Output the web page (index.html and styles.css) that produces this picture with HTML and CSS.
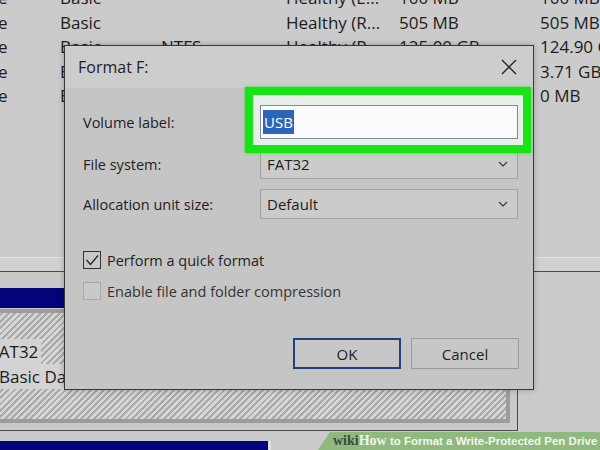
FILE: index.html
```html
<!DOCTYPE html>
<html lang="en">
<head>
  <meta charset="UTF-8" />
  <title>Format F:</title>
  <link rel="stylesheet" href="styles.css">
</head>
<body>
  <div class="screen">
    <!-- Volume list behind the dialog -->
    <div class="volumes">
      <div class="vol-row"><span>Simple</span><span>Basic</span><span></span><span>Healthy (E...</span><span>100 MB</span><span>100 MB</span></div>
      <div class="vol-row"><span>Simple</span><span>Basic</span><span></span><span>Healthy (R...</span><span>505 MB</span><span>505 MB</span></div>
      <div class="vol-row"><span>Simple</span><span>Basic</span><span>NTFS</span><span>Healthy (P...</span><span>125.00 GB</span><span>124.90 GB</span></div>
      <div class="vol-row"><span>Simple</span><span>Basic</span><span>FAT32</span><span>Healthy (B...</span><span>3.71 GB</span><span>3.71 GB</span></div>
      <div class="vol-row"><span>Simple</span><span>Basic</span><span></span><span>Healthy (...</span><span>16 MB</span><span>0 MB</span></div>
    </div>
    <div class="splitter"></div>

    <!-- Disk map -->
    <div class="disk">
      <div class="part-head"></div>
      <div class="part-body">
        <div class="part-label">
          <span class="fs">FAT32</span>
          <span class="status">Basic Data Partition)</span>
        </div>
      </div>
    </div>
    <div class="disk2">
      <div class="part-head short"></div>
    </div>

    <!-- Format dialog -->
    <div class="dialog">
      <div class="dialog-title">
        <span>Format F:</span>
        <svg class="close" width="16" height="16" viewBox="0 0 16 16">
          <path d="M1 1 L15 15 M15 1 L1 15" stroke="#222" stroke-width="1.3" fill="none" />
        </svg>
      </div>
      <div class="dialog-body">
        <div class="fields">
          <label>Volume label:</label>
          <div class="vol-input">
            <div class="text-box"><span class="selected">USB</span></div>
          </div>
          <label>File system:</label>
          <div class="select">
            <span>FAT32</span>
            <svg width="10" height="6" viewBox="0 0 10 6"><path d="M1 1 L5 5 L9 1" stroke="#333" stroke-width="1.1" fill="none" /></svg>
          </div>
          <label>Allocation unit size:</label>
          <div class="select">
            <span>Default</span>
            <svg width="10" height="6" viewBox="0 0 10 6"><path d="M1 1 L5 5 L9 1" stroke="#333" stroke-width="1.1" fill="none" /></svg>
          </div>
        </div>

        <div class="checks">
          <div class="check-row">
            <span class="box checked">
              <svg width="16" height="16" viewBox="0 0 16 16"><path d="M2.5 8 L6.5 12.5 L14 3.5" stroke="#222" stroke-width="1.2" fill="none" /></svg>
            </span>
            Perform a quick format
          </div>
          <div class="check-row disabled">
            <span class="box"></span>
            Enable file and folder compression
          </div>
        </div>

        <div class="buttons">
          <button type="button" class="btn default">OK</button>
          <button type="button" class="btn">Cancel</button>
        </div>
      </div>
    </div>

    <div class="wikihow"><span class="wiki">wiki</span><span class="how">How</span> to Format a Write-Protected Pen Drive</div>
  </div>
</body>
</html>
```

FILE: styles.css
```css
* {
  box-sizing: border-box;
}
html, body {
  margin: 0;
  padding: 0;
}
body {
  font-family: 'Open Sans', 'Noto Sans', sans-serif;
  color: #1c1c1c;
  background: #cbcbcb;
}
.screen {
  position: relative;
  width: 600px;
  height: 450px;
  overflow: hidden;
  background: #cbcbcb;
}

/* volume list */
.volumes {
  height: 271px;
  margin-top: -14px;
  margin-left: -46px;
  font-size: 17px;
}
.vol-row {
  display: grid;
  grid-template-columns: 106px 101px 125px 113px 141px auto;
  height: 24.5px;
  line-height: 24.5px;
  white-space: nowrap;
}
.splitter {
  height: 15px;
  border-top: 1px solid #e2e2e2;
  border-bottom: 1px solid #4a4a4a;
  background: #d1d1d1;
}

/* disk map */
.disk {
  width: 518px;
  padding: 16px 7px 7px 0;
  border-right: 1px solid #4a4a4a;
  border-bottom: 1px solid #4a4a4a;
  background: #c9c9c9;
}
.part-head {
  height: 20px;
  margin-bottom: 1px;
  background: #04047a;
}
.part-body {
  height: 114px;
  border: 4px solid #9c9c9c;
  border-left: none;
  padding-top: 26px;
  background: repeating-linear-gradient(-45deg, #d6d6d6 0, #d6d6d6 2.5px, #a9a9a9 2.5px, #a9a9a9 4.5px);
}
.part-label {
  display: flex;
  flex-direction: column;
  align-items: flex-start;
  font-size: 17px;
  line-height: 25px;
  white-space: nowrap;
}
.part-label span {
  background: #d3d3d3;
  padding-right: 3px;
}
.part-label .fs {
  margin-left: -10px;
}
.part-label .status {
  margin-left: -1px;
}
.disk2 {
  padding-top: 10px;
}
.part-head.short {
  width: 271px;
  height: 10px;
  border-right: 3px solid #e0e0e0;
}

/* dialog */
.dialog {
  position: absolute;
  left: 64px;
  top: 45px;
  width: 470px;
  height: 345px;
  border: 1px solid #383838;
  background: #c5c5c5;
  box-shadow: 0 0 6px rgba(0,0,0,0.25);
  font-size: 14.5px;
  color: #1e1e1e;
}
.dialog-title {
  height: 42px;
  display: flex;
  align-items: center;
  justify-content: space-between;
  padding: 0 16px 0 13px;
  background: #cdcdcd;
  font-size: 16px;
}
.dialog-body {
  padding: 17px 14px 0 18px;
}
.fields {
  display: grid;
  grid-template-columns: 177px 258px;
  grid-template-rows: 34px 30px 30px;
  row-gap: 10px;
  align-items: center;
}
.vol-input {
  position: relative;
  z-index: 2;
  height: 34px;
}
.vol-input::before {
  content: "";
  position: absolute;
  top: -18px;
  left: -15px;
  right: -13px;
  bottom: -14px;
  border: 8px solid #17e317;
  background: #e8eee8;
  box-shadow: 0 0 3px #2eea2e;
  z-index: -1;
}
.text-box {
  height: 34px;
  border: 1px solid #7b8da2;
  background: #fbfbfb;
  padding: 4px 2px;
  font-size: 15px;
  line-height: 24px;
}
.selected {
  display: inline-block;
  background: #2c66bb;
  color: #fff;
  padding: 0 1px;
}
.select {
  height: 30px;
  display: flex;
  align-items: center;
  justify-content: space-between;
  padding: 0 9px 0 6px;
  border: 1px solid #a3a3a3;
  background: #cbcbcb;
  font-size: 15px;
}
.checks {
  margin-top: 32px;
  display: flex;
  flex-direction: column;
  gap: 13px;
}
.check-row {
  display: flex;
  align-items: center;
  gap: 6px;
  height: 18px;
}
.box {
  width: 18px;
  height: 18px;
  border: 1px solid #333;
  background: #c8c8c8;
  display: flex;
  align-items: center;
  justify-content: center;
}
.check-row.disabled {
  color: #333;
}
.check-row.disabled .box {
  border-color: #a9a9a9;
  background: #c9c9c9;
}
.buttons {
  margin-top: 38px;
  display: flex;
  justify-content: flex-end;
  gap: 10px;
}
.btn {
  width: 108px;
  height: 31px;
  font-family: 'Open Sans', 'Noto Sans', sans-serif;
  font-size: 15px;
  color: #1e1e1e;
  background: #c7c7c7;
  border: 1px solid #9a9a9a;
  padding: 0;
}
.btn.default {
  border: 2px solid #22407c;
}

/* watermark */
.wikihow {
  position: absolute;
  left: 318px;
  top: 432px;
  width: 282px;
  height: 18px;
  padding-left: 15px;
  background: #8fb97e;
  clip-path: polygon(12px 0, 100% 0, 100% 100%, 0 100%);
  font-family: 'Liberation Sans', sans-serif;
  font-weight: bold;
  font-size: 11.5px;
  line-height: 18px;
  color: #f2f6ee;
  white-space: nowrap;
}
.wiki, .how {
  font-family: 'Liberation Serif', serif;
  font-size: 14px;
}
.wiki {
  color: #3e4b37;
}
.how {
  color: #eef4e8;
}
```
